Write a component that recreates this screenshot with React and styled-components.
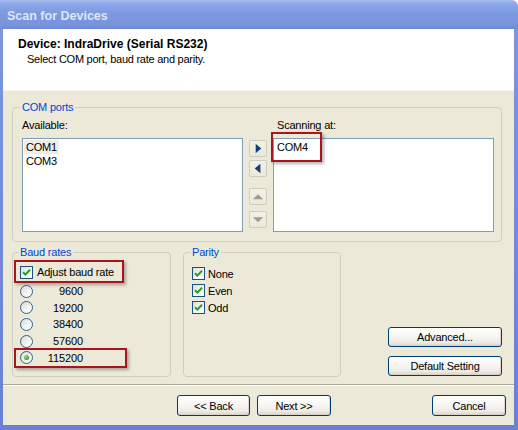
import styled, { createGlobalStyle } from "styled-components";

const GlobalStyle = createGlobalStyle`
  html, body { margin: 0; padding: 0; background: #fff; }
  body {
    font-family: "Liberation Sans", Arial, sans-serif;
    font-size: 11px;
    color: #000;
  }
  * { box-sizing: border-box; }
`;

const Window = styled.div`
  width: 518px;
  height: 430px;
  display: flex;
  flex-direction: column;
  background: linear-gradient(180deg, #7f98de 0%, #7189d8 60%, #6a80d2 100%);
  border-top-right-radius: 7px;
  overflow: hidden;
`;

const TitleBar = styled.div`
  height: 29px;
  flex: 0 0 29px;
  display: flex;
  align-items: center;
  padding: 3px 0 0 7px;
  font-weight: bold;
  font-size: 12.5px;
  color: #dce6f8;
  background: linear-gradient(180deg, #a9bff2 0%, #8ea9ea 12%, #7d99e0 45%, #7994de 85%, #6f88d4 100%);
`;

const Frame = styled.div`
  flex: 1;
  display: flex;
  flex-direction: column;
  margin: 0 4px 5px 3px;
  background: #ece9d8;
`;

const Header = styled.div`
  height: 62px;
  flex: 0 0 62px;
  background: #fff;
  padding: 8px 0 0 15px;
  border-bottom: 1px solid #f7f5ec;
`;

const HeaderTitle = styled.div`
  font-weight: bold;
  font-size: 12px;
  line-height: 14px;
`;

const HeaderSub = styled.div`
  padding-left: 9px;
  margin-top: 1px;
  line-height: 15px;
  letter-spacing: -0.25px;
`;

const Content = styled.div`
  flex: 1;
  display: flex;
  flex-direction: column;
  gap: 4px;
  padding: 10px 12px 0 9px;
`;

const Group = styled.fieldset`
  margin: 0;
  min-width: 0;
  border: 1px solid #d0d0bf;
  border-radius: 4px;
  padding: ${(p) => p.$pad};
  width: ${(p) => p.$width || "auto"};
  height: ${(p) => p.$height || "auto"};
`;

const Legend = styled.legend`
  color: #0046d5;
  padding: 0 2px;
  margin-left: -2px;
  line-height: 13px;
  letter-spacing: -0.2px;
`;

const PortGrid = styled.div`
  display: grid;
  grid-template-columns: 221px 18px 221px;
  grid-template-rows: 13px 94px;
  column-gap: 6px;
  row-gap: 6px;
`;

const Caption = styled.div`
  line-height: 13px;
  padding-left: ${(p) => p.$indent || 0}px;
  letter-spacing: -0.2px;
`;

const ListBox = styled.div`
  background: #fff;
  border: 1px solid #7f9db9;
  padding-top: 1px;
`;

const ListItem = styled.div`
  position: relative;
  line-height: 14px;
  padding-left: 3px;
`;

const ItemText = styled.span`
  display: inline-block;
  padding: 0 2px;
  margin-left: -2px;
  background: ${(p) => (p.$selected ? "#efede4" : "transparent")};
  letter-spacing: -0.2px;
`;

const ArrowColumn = styled.div`
  display: flex;
  flex-direction: column;
  padding-top: 2px;
`;

const ArrowButton = styled.div`
  width: 18px;
  height: 17px;
  display: flex;
  align-items: center;
  justify-content: center;
  border: 1px solid #cfcdbf;
  border-radius: 2px;
  background: linear-gradient(180deg, #f2f1ea 0%, #ece9d8 100%);
  margin-top: ${(p) => p.$gap || 0}px;
`;

const Mark = styled.span`
  position: absolute;
  left: ${(p) => p.$left}px;
  top: ${(p) => p.$top}px;
  width: ${(p) => p.$w}px;
  height: ${(p) => p.$h}px;
  border: 2px solid #a5161e;
  box-shadow: 2px 2px 3px rgba(0, 0, 0, 0.3);
  pointer-events: none;
`;

const BottomRow = styled.div`
  display: flex;
  gap: 12px;
`;

const OptionRow = styled.div`
  position: relative;
  display: flex;
  align-items: center;
  height: ${(p) => p.$h}px;
`;

const CheckBox = styled.span`
  width: 13px;
  height: 13px;
  flex: 0 0 13px;
  border: 1px solid #1c5180;
  background: linear-gradient(135deg, #dcdcd7 0%, #f6f6f3 60%, #ffffff 100%);
  display: flex;
  align-items: center;
  justify-content: center;
`;

const Radio = styled.span`
  width: 13px;
  height: 13px;
  flex: 0 0 13px;
  border-radius: 50%;
  border: 1px solid #2f5f8f;
  background: linear-gradient(135deg, #dcdcd7 0%, #f4f4f0 60%, #ffffff 100%);
  display: flex;
  align-items: center;
  justify-content: center;
`;

const RadioDot = styled.span`
  width: 5px;
  height: 5px;
  border-radius: 50%;
  background: radial-gradient(circle at 35% 35%, #8ee68e 0%, #30b030 60%, #1f8f1f 100%);
`;

const OptionLabel = styled.span`
  margin-left: ${(p) => p.$gap || 3}px;
  letter-spacing: -0.2px;
`;

const RateLabel = styled.span`
  width: 50px;
  text-align: right;
  letter-spacing: -0.1px;
`;

const SideButtons = styled.div`
  flex: 1;
  display: flex;
  flex-direction: column;
  align-items: flex-end;
  justify-content: flex-end;
  gap: 9px;
  padding-bottom: 1px;
`;

const XPButton = styled.div`
  width: ${(p) => p.$w}px;
  height: ${(p) => p.$h || 21}px;
  display: flex;
  align-items: center;
  justify-content: center;
  border: 1px solid #003c74;
  border-radius: 3px;
  background: linear-gradient(180deg, #ffffff 0%, #f7f6f2 45%, #ecebe5 80%, #d8d3c8 100%);
  box-shadow: inset -1px -1px 0 rgba(214, 208, 197, 0.8);
  margin-left: ${(p) => p.$ml || 0};
  letter-spacing: -0.2px;
`;

const Footer = styled.div`
  height: 41px;
  flex: 0 0 41px;
  display: flex;
  align-items: flex-start;
  gap: 7px;
  padding: 10px 8px 0 174px;
  border-top: 1px solid #aca899;
  box-shadow: inset 0 1px 0 #ffffff;
`;

const Check = () => (
  <svg width="9" height="9" viewBox="0 0 9 9">
    <path d="M1 4.2 L3.4 6.6 L8 1.8" fill="none" stroke="#21a121" strokeWidth="2" />
  </svg>
);

const Arrow = ({ dir, color }) => {
  const shapes = {
    right: "M6 3 L12 8 L6 13 Z",
    left: "M11 3 L5 8 L11 13 Z",
    up: "M3 11 L8.5 5.5 L14 11 Z",
    down: "M3 5.5 L8.5 11 L14 5.5 Z",
  };
  return (
    <svg width="16" height="15" viewBox="0 0 17 16">
      <path d={shapes[dir]} fill={color} />
    </svg>
  );
};

const rates = ["9600", "19200", "38400", "57600", "115200"];

export default function App() {
  return (
    <>
      <GlobalStyle />
      <Window>
        <TitleBar>Scan for Devices</TitleBar>
        <Frame>
          <Header>
            <HeaderTitle>Device: IndraDrive (Serial RS232)</HeaderTitle>
            <HeaderSub>Select COM port, baud rate and parity.</HeaderSub>
          </Header>
          <Content>
            <Group $pad="5px 7px 9px 9px">
              <Legend>COM ports</Legend>
              <PortGrid>
                <Caption>Available:</Caption>
                <div />
                <Caption $indent={4}>Scanning at:</Caption>
                <ListBox>
                  <ListItem>
                    <ItemText $selected>COM1</ItemText>
                  </ListItem>
                  <ListItem>
                    <ItemText>COM3</ItemText>
                  </ListItem>
                </ListBox>
                <ArrowColumn>
                  <ArrowButton>
                    <Arrow dir="right" color="#163f70" />
                  </ArrowButton>
                  <ArrowButton $gap={3}>
                    <Arrow dir="left" color="#163f70" />
                  </ArrowButton>
                  <ArrowButton $gap={11}>
                    <Arrow dir="up" color="#9f9d92" />
                  </ArrowButton>
                  <ArrowButton $gap={6}>
                    <Arrow dir="down" color="#9f9d92" />
                  </ArrowButton>
                </ArrowColumn>
                <ListBox>
                  <ListItem>
                    <ItemText>COM4</ItemText>
                    <Mark $left={-3} $top={-8} $w={51} $h={30} />
                  </ListItem>
                </ListBox>
              </PortGrid>
            </Group>
            <BottomRow>
              <Group $pad="2px 6px 0 7px" $width="159px" $height="131px">
                <Legend>Baud rates</Legend>
                <OptionRow $h={22}>
                  <CheckBox>
                    <Check />
                  </CheckBox>
                  <OptionLabel $gap={4}>Adjust baud rate</OptionLabel>
                  <Mark $left={-6} $top={-1} $w={110} $h={23} />
                </OptionRow>
                {rates.map((r, i) => (
                  <OptionRow key={r} $h={16.6}>
                    <Radio>{i === rates.length - 1 && <RadioDot />}</Radio>
                    <RateLabel>{r}</RateLabel>
                    {i === rates.length - 1 && <Mark $left={-6} $top={-1} $w={113} $h={20} />}
                  </OptionRow>
                ))}
              </Group>
              <Group $pad="6px 6px 0 8px" $width="158px" $height="131px">
                <Legend>Parity</Legend>
                {["None", "Even", "Odd"].map((p) => (
                  <OptionRow key={p} $h={17}>
                    <CheckBox>
                      <Check />
                    </CheckBox>
                    <OptionLabel>{p}</OptionLabel>
                  </OptionRow>
                ))}
              </Group>
              <SideButtons>
                <XPButton $w={114} $h={20}>Advanced...</XPButton>
                <XPButton $w={114} $h={20}>Default Setting</XPButton>
              </SideButtons>
            </BottomRow>
          </Content>
          <Footer>
            <XPButton $w={73}>&lt;&lt; Back</XPButton>
            <XPButton $w={74}>Next &gt;&gt;</XPButton>
            <XPButton $w={74} $ml="auto">Cancel</XPButton>
          </Footer>
        </Frame>
      </Window>
    </>
  );
}
